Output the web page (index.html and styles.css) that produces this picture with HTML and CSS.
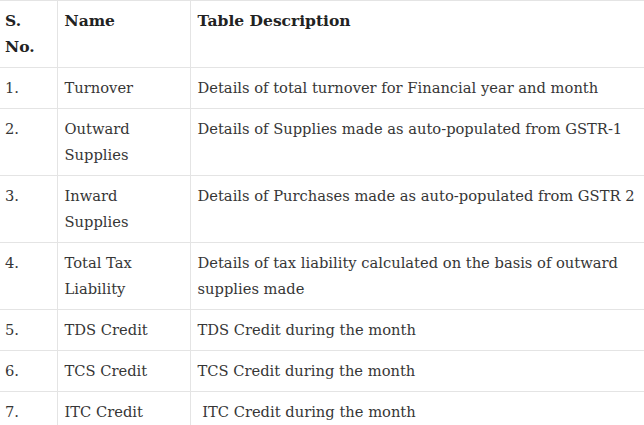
FILE: index.html
```html
<!DOCTYPE html>
<html>
<head>
<meta charset="utf-8">
<link rel="stylesheet" href="styles.css">
</head>
<body>
<table class="gst-table">
  <colgroup>
    <col class="col-no">
    <col class="col-name">
    <col class="col-desc">
  </colgroup>
  <thead>
    <tr>
      <th>S. No.</th>
      <th>Name</th>
      <th>Table Description</th>
    </tr>
  </thead>
  <tbody>
    <tr><td>1.</td><td>Turnover</td><td>Details of total turnover for Financial year and month</td></tr>
    <tr><td>2.</td><td>Outward Supplies</td><td>Details of Supplies made as auto-populated from GSTR-1</td></tr>
    <tr><td>3.</td><td>Inward Supplies</td><td>Details of Purchases made as auto-populated from GSTR 2</td></tr>
    <tr><td>4.</td><td>Total Tax Liability</td><td>Details of tax liability calculated on the basis of outward supplies made</td></tr>
    <tr><td>5.</td><td>TDS Credit</td><td>TDS Credit during the month</td></tr>
    <tr><td>6.</td><td>TCS Credit</td><td>TCS Credit during the month</td></tr>
    <tr><td>7.</td><td>ITC Credit</td><td>&nbsp;ITC Credit during the month</td></tr>
  </tbody>
</table>
</body>
</html>
```
FILE: styles.css
```css
html, body {
  margin: 0;
  padding: 0;
  background: #ffffff;
}
body {
  font-family: "DejaVu Serif", Georgia, serif;
  font-size: 14.7px;
  line-height: 26px;
  color: #363636;
  overflow: hidden;
}
.gst-table {
  border-collapse: collapse;
  width: 660px;
  table-layout: fixed;
}
.col-no { width: 57px; }
.col-name { width: 133px; }
.col-desc { width: 470px; }
.gst-table th,
.gst-table td {
  border: 1px solid #e4e4e4;
  padding: 7px;
  text-align: left;
  vertical-align: top;
}
.gst-table th {
  font-weight: bold;
  font-size: 15.5px;
  color: #222222;
}
.gst-table th:first-child,
.gst-table td:first-child {
  border-left: none;
  padding-left: 5px;
}
```
